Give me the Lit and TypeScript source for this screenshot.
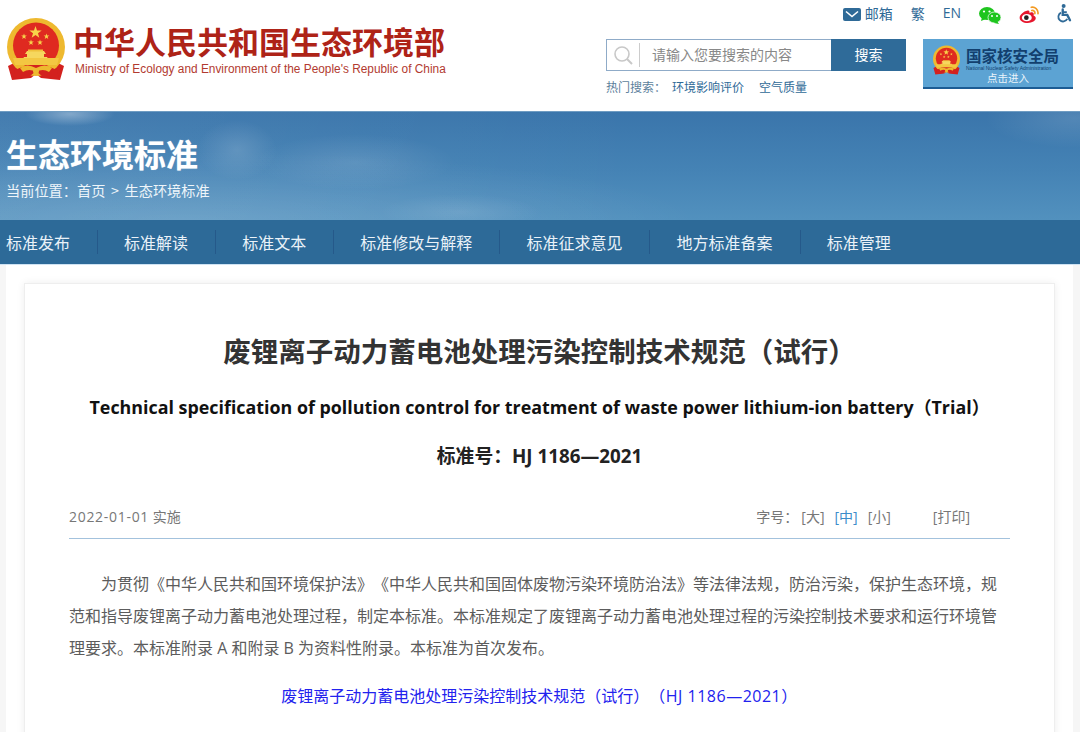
import { LitElement, html, css, svg } from "lit";
import { customElement } from "lit/decorators.js";

const star = (cx: number, cy: number, r: number) => {
  const pts: string[] = [];
  for (let i = 0; i < 10; i++) {
    const a = -Math.PI / 2 + (i * Math.PI) / 5;
    const rr = i % 2 ? r * 0.4 : r;
    pts.push(`${(cx + rr * Math.cos(a)).toFixed(2)},${(cy + rr * Math.sin(a)).toFixed(2)}`);
  }
  return svg`<polygon points=${pts.join(" ")} fill="#f7d34a"></polygon>`;
};

const emblem = (cls: string) => html`<svg class=${cls} viewBox="0 0 58 62">
  <path d="M9 44 L1 48 L5 62 L24 60 L29 56 L34 60 L53 62 L57 48 L49 44 Z" fill="#d3211e"></path>
  <circle cx="29" cy="29" r="29" fill="#eeb92f"></circle>
  <circle cx="29" cy="27.5" r="23" fill="#df2a20"></circle>
  ${star(28.5, 14.5, 6.5)}${star(17, 18.5, 3)}${star(39.5, 18.5, 3)}${star(24, 24.5, 3)}${star(33, 24.5, 3)}
  <path d="M20 33h17l2 3h-2v3h3l3 5H14l3-5h3v-3h-2z" fill="#f6d75e"></path>
  <rect x="21" y="31.5" width="15" height="2" fill="#f0c23c"></rect>
  <path d="M6 40 H52 L50 47 H8 Z" fill="#f3c742"></path>
  <path d="M8 52 Q29 42 50 52 L52 61 L36 59 L29 53 L22 59 L6 61 Z" fill="#d3211e"></path>
  <path d="M13 50 Q20 45 29 50 Q38 45 45 50 L42 54 Q36 50 29 54 Q22 50 16 54 Z" fill="#eeb92f"></path>
  <circle cx="29" cy="53" r="3" fill="#eeb92f"></circle>
</svg>`;

@customElement("app-root")
export class AppRoot extends LitElement {
  static styles = css`
    :host {
      display: block;
      width: 1080px;
      height: 732px;
      overflow: hidden;
      background: #f6f6f6;
      font-family: "Open Sans", "Noto Sans CJK SC", sans-serif;
      color: #333;
      text-spacing-trim: space-all;
    }
    * { box-sizing: border-box; }
    header {
      height: 111px;
      background: #fff;
      display: flex;
      justify-content: space-between;
      padding: 0 7px;
    }
    .logo { display: flex; padding-top: 18px; gap: 10px; align-items: flex-start; height: 80px; }
    .emblem-lg { width: 58px; height: 62px; flex: none; }
    .logo-text { display: flex; flex-direction: column; margin-top: 4px; }
    .logo-cn {
      font: 700 31px/38px "Noto Sans CJK SC", sans-serif;
      color: #ae2317;
      white-space: nowrap;
      margin-left: -2px;
    }
    .logo-en {
      font: 11.87px/14px "Liberation Sans", sans-serif;
      color: #b23a30;
      white-space: nowrap;
      margin-top: 2px;
    }
    .right { width: 467px; display: flex; flex-direction: column; }
    .tools {
      height: 39px;
      display: flex;
      justify-content: flex-end;
      align-items: flex-start;
      padding-top: 3px;
      font: 14px/20px "Noto Sans CJK SC", sans-serif;
      color: #2f6a97;
    }
    .mail { display: flex; align-items: flex-start; gap: 4px; margin-right: 18px; }
    .mail svg { width: 18px; height: 13px; margin-top: 5px; }
    .fan { margin-right: 18px; }
    .en { margin-right: 18px; font-family: "Open Sans", sans-serif; font-size: 14px; }
    .wx { width: 22px; height: 17px; margin-top: 4px; margin-right: 18px; }
    .wb { width: 21px; height: 17px; margin-top: 3px; margin-right: 17px; }
    .acc { width: 16px; height: 19px; margin-top: 1px; }
    .row { display: flex; gap: 17px; }
    .search-col { width: 300px; }
    .search { display: flex; height: 32px; }
    .box {
      width: 225px;
      border: 1px solid #8fabc8;
      border-right: none;
      display: flex;
      align-items: center;
      font: 14px/20px "Noto Sans CJK SC", sans-serif;
      color: #888;
    }
    .box svg { width: 20px; height: 20px; margin-left: 6px; }
    .vline { width: 1px; height: 24px; background: #ccc; margin: 0 12px 0 6px; }
    .ph { margin-bottom: 3px; }
    .btn {
      width: 75px;
      background: #2f6b99;
      color: #fff;
      display: flex;
      align-items: center;
      justify-content: center;
      padding-bottom: 2px;
      font: 14px/20px "Noto Sans CJK SC", sans-serif;
    }
    .hot {
      display: flex;
      margin-top: 6px;
      font: 12px/20px "Noto Sans CJK SC", sans-serif;
      color: #2f6a97;
      white-space: nowrap;
    }
    .hot .lbl { color: #5d7f9c; margin-right: 6px; }
    .hot .k { margin-right: 15px; }
    .nnsa {
      width: 150px;
      height: 50px;
      background: #5ca3d3;
      border-bottom: 2px solid #1c5c94;
      display: flex;
      flex-direction: column;
      position: relative;
      padding-left: 43px;
      padding-top: 6px;
    }
    .emblem-sm { width: 27px; height: 30px; position: absolute; left: 10px; top: 6px; }
    .n1 { font: 700 15.5px/20px "Noto Sans CJK SC", sans-serif; color: #123f6e; white-space: nowrap; }
    .n2 { font: 5px/6px "Liberation Sans", sans-serif; color: #123f6e; white-space: nowrap; }
    .n3 { font: 10.5px/14px "Noto Sans CJK SC", sans-serif; color: #eaf4fb; margin-left: 21px; white-space: nowrap; }
    .banner {
      height: 109px;
      padding: 21px 0 0 6px;
      border-top: 1px solid #6f9cc2;
      color: #fff;
      background:
        radial-gradient(ellipse 45px 12px at 70px 2px, rgba(255, 255, 255, 0.34), transparent),
        radial-gradient(ellipse 40px 30px at 237px 38px, rgba(255, 255, 255, 0.14), transparent),
        radial-gradient(ellipse 100px 28px at 355px 50px, rgba(255, 255, 255, 0.11), transparent),
        radial-gradient(ellipse 80px 18px at 460px 100px, rgba(255, 255, 255, 0.1), transparent),
        radial-gradient(ellipse 90px 30px at 1075px 6px, rgba(255, 255, 255, 0.12), transparent),
        radial-gradient(ellipse 520px 70px at 180px 109px, rgba(255, 255, 255, 0.13), transparent),
        linear-gradient(90deg, rgba(255, 255, 255, 0.05), transparent 60%),
        linear-gradient(180deg, #3a75ab 0%, #4583b5 55%, #5291be 100%);
    }
    .banner h1 {
      margin: 0;
      font: 700 32px/40px "Noto Sans CJK SC", sans-serif;
      text-shadow: 0 0 1px rgba(255,255,255,.4);
    }
    .crumb {
      font: 14.2px/20px "Noto Sans CJK SC", sans-serif;
      word-spacing: 2.5px;
      margin-top: 7px;
      color: #eef5fa;
      white-space: nowrap;
    }
    nav {
      height: 45px;
      background: #2d6a98;
      border-bottom: 1px solid #cfe3f3;
      display: flex;
      align-items: center;
      padding-left: 6px;
      font: 16px/24px "Noto Sans CJK SC", sans-serif;
      color: #eaf2f8;
    }
    nav span { padding: 0 27px 0 26.1px; border-right: 1px solid #25598a; white-space: nowrap; }
    nav span:first-child { padding-left: 0; }
    nav span:last-child { border-right: none; }
    .wrap {
      margin: 0 7px 0 6px;
      background: #fff;
      padding: 18px 18px 0 18px;
      height: 500px;
    }
    .card {
      background: #fff;
      border: 1px solid #eee;
      box-shadow: 0 0 8px rgba(0, 0, 0, 0.07);
      height: 600px;
      padding: 0 44px;
      text-align: center;
    }
    h2 {
      margin: 47px 0 0;
      font: 700 27.5px/38px "Noto Sans CJK SC", sans-serif;
      color: #333;
      white-space: nowrap;
    }
    .en-title {
      margin-top: 25px;
      font: 700 17.86px/26px "Open Sans", "Noto Sans CJK SC", sans-serif;
      color: #111;
      white-space: nowrap;
    }
    .no {
      margin-top: 23px;
      font: 700 18.8px/26px "Open Sans", "Noto Sans CJK SC", sans-serif;
      color: #222;
    }
    .meta {
      margin-top: 38px;
      height: 32px;
      border-bottom: 1px solid #a3c2dd;
      display: flex;
      justify-content: space-between;
      align-items: flex-start;
      font: 14px/20px "Open Sans", "Noto Sans CJK SC", sans-serif;
      color: #777;
      padding-right: 40px;
    }
    .date { letter-spacing: 0.7px; }
    .ops { display: flex; }
    .ops span { margin-left: 10px; }
    .ops .lbl { margin: 0; }
    .ops .first { margin-left: 3px; }
    .ops .on { color: #3c8dca; }
    .ops .print { margin-left: 42px; }
    p {
      margin: 29px 0 0;
      text-align: left;
      text-indent: 2em;
      font: 16px/32px "Open Sans", "Noto Sans CJK SC", sans-serif;
      color: #5c5c5c;
    }
    .link {
      margin-top: 16px;
      font: 16px/32px "Open Sans", "Noto Sans CJK SC", sans-serif;
      color: #2222ee;
      white-space: nowrap;
    }
    .lat { letter-spacing: 0.5px; }
  `;

  render() {
    return html`
      <header>
        <div class="logo">
          ${emblem("emblem-lg")}
          <div class="logo-text">
            <div class="logo-cn">中华人民共和国生态环境部</div>
            <div class="logo-en">Ministry of Ecology and Environment of the People's Republic of China</div>
          </div>
        </div>
        <div class="right">
          <div class="tools">
            <div class="mail">
              <svg viewBox="0 0 18 13"><rect width="18" height="13" rx="2" fill="#2f6a97"></rect><path d="M3 3.500l6 5 6-5" fill="none" stroke="#fff" stroke-width="1.600"></path></svg>
              <span>邮箱</span>
            </div>
            <span class="fan">繁</span>
            <span class="en">EN</span>
            <svg class="wx" viewBox="0 0 22 17">
              <ellipse cx="8" cy="6.500" rx="8" ry="6.500" fill="#1fc51f"></ellipse>
              <path d="M3 10l-1 4 5-2z" fill="#1fc51f"></path>
              <ellipse cx="15.500" cy="10.500" rx="6.500" ry="5.500" fill="#1fc51f" stroke="#fff" stroke-width=".7"></ellipse>
              <path d="M18 14l2 3-5-1z" fill="#1fc51f"></path>
              <circle cx="5" cy="4.500" r="1.100" fill="#fff"></circle><circle cx="10.500" cy="4.500" r="1.100" fill="#fff"></circle>
              <circle cx="13" cy="9" r="1" fill="#fff"></circle><circle cx="18" cy="9" r="1" fill="#fff"></circle>
            </svg>
            <svg class="wb" viewBox="0 0 22 19">
              <path d="M9 5C4 6 0 10 0 13c0 3.500 4 6 9 6s9-2.500 9-5.500c0-2-2-2.500-2.500-3 .8-2 .3-3.500-2-3.500-1 0-2 .5-2.500.8C11 6 11 4.500 9 5z" fill="#e6162d"></path>
              <ellipse cx="8" cy="13" rx="5.500" ry="4" fill="#fff"></ellipse>
              <circle cx="7.500" cy="13" r="2.600" fill="#222"></circle>
              <path d="M13 1.500c4-1 8 2.500 7.500 7M13.500 5c2-.5 4 1 3.500 3.500" fill="none" stroke="#f39a22" stroke-width="1.800" stroke-linecap="round"></path>
            </svg>
            <svg class="acc" viewBox="0 0 17 21">
              <circle cx="7" cy="2.200" r="2.200" fill="#2f6a97"></circle>
              <path d="M6 6v6h5l3 6" fill="none" stroke="#2f6a97" stroke-width="2.600" stroke-linecap="round"></path>
              <path d="M6 9h4.500" stroke="#2f6a97" stroke-width="2"></path>
              <path d="M4 9.500a5.200 5.200 0 1 0 7 7" fill="none" stroke="#2f6a97" stroke-width="2"></path>
            </svg>
          </div>
          <div class="row">
            <div class="search-col">
              <div class="search">
                <div class="box">
                  <svg viewBox="0 0 20 20"><circle cx="9" cy="9" r="7" fill="none" stroke="#c8c8c8" stroke-width="1.600"></circle><path d="M14 14l5 5" stroke="#c8c8c8" stroke-width="2"></path></svg>
                  <span class="vline"></span>
                  <span class="ph">请输入您要搜索的内容</span>
                </div>
                <div class="btn">搜索</div>
              </div>
              <div class="hot"><span class="lbl">热门搜索：</span><span class="k">环境影响评价</span><span>空气质量</span></div>
            </div>
            <div class="nnsa">
              ${emblem("emblem-sm")}
              <div class="n1">国家核安全局</div>
              <div class="n2">National Nuclear Safety Administration</div>
              <div class="n3">点击进入</div>
            </div>
          </div>
        </div>
      </header>
      <section class="banner">
        <h1>生态环境标准</h1>
        <div class="crumb">当前位置：首页 &gt; 生态环境标准</div>
      </section>
      <nav>
        <span>标准发布</span><span>标准解读</span><span>标准文本</span><span>标准修改与解释</span><span>标准征求意见</span><span>地方标准备案</span><span>标准管理</span>
      </nav>
      <div class="wrap">
        <div class="card">
          <h2>废锂离子动力蓄电池处理污染控制技术规范（试行）</h2>
          <div class="en-title">Technical specification of pollution control for treatment of waste power lithium-ion battery（Trial）</div>
          <div class="no">标准号：HJ 1186—2021</div>
          <div class="meta">
            <span><span class="date">2022-01-01</span> 实施</span>
            <div class="ops"><span class="lbl">字号：</span><span class="first">[大]</span><span class="on">[中]</span><span>[小]</span><span class="print">[打印]</span></div>
          </div>
          <p>为贯彻《中华人民共和国环境保护法》《中华人民共和国固体废物污染环境防治法》等法律法规，防治污染，保护生态环境，规范和指导废锂离子动力蓄电池处理过程，制定本标准。本标准规定了废锂离子动力蓄电池处理过程的污染控制技术要求和运行环境管理要求。本标准附录 A 和附录 B 为资料性附录。本标准为首次发布。</p>
          <div class="link">废锂离子动力蓄电池处理污染控制技术规范（试行）<span class="lat">（HJ 1186—2021）</span></div>
        </div>
      </div>
    `;
  }
}
